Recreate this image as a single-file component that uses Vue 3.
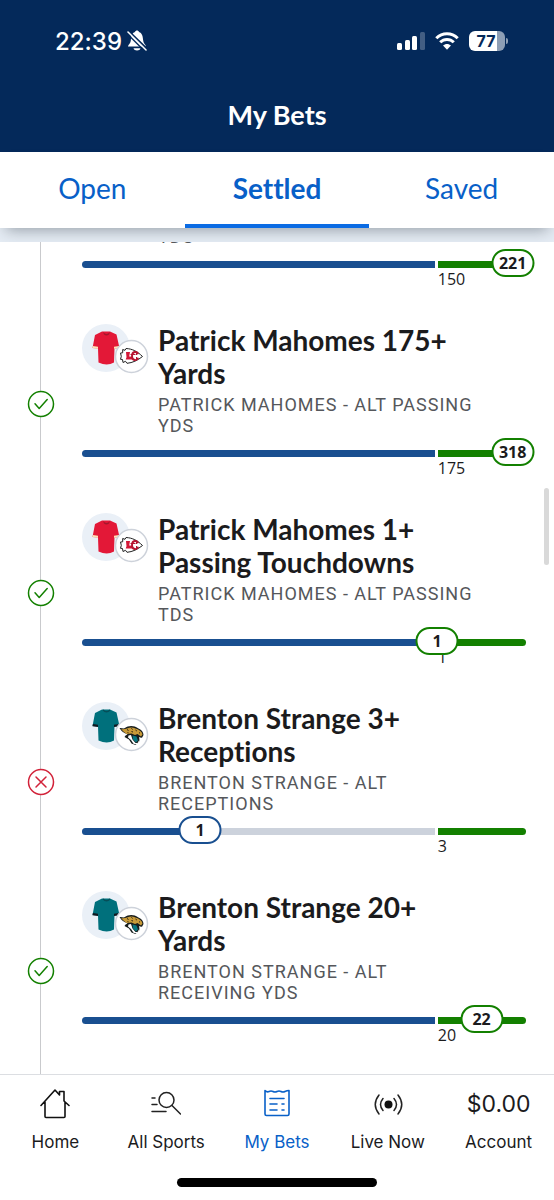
<script setup>
import { ref } from 'vue'

const tabs = ['Open', 'Settled', 'Saved']
const activeTab = ref('Settled')

const legs = [
  { id: 1, partial: true, market: 'YDS', fill: 100, at: 97, value: '221', target: '150', tone: 'win' },
  { id: 2, title: 'Patrick Mahomes 175+ Yards', market: 'PATRICK MAHOMES - ALT PASSING YDS', team: 'chiefs', won: true, fill: 100, at: 97, value: '318', target: '175', tone: 'win' },
  { id: 3, title: 'Patrick Mahomes 1+ Passing Touchdowns', market: 'PATRICK MAHOMES - ALT PASSING TDS', team: 'chiefs', won: true, fill: 100, at: 80, value: '1', target: '1', tone: 'win' },
  { id: 4, title: 'Brenton Strange 3+ Receptions', market: 'BRENTON STRANGE - ALT RECEPTIONS', team: 'jaguars', won: false, fill: 33, at: 26.6, value: '1', target: '3', tone: 'loss' },
  { id: 5, title: 'Brenton Strange 20+ Yards', market: 'BRENTON STRANGE - ALT RECEIVING YDS', team: 'jaguars', won: true, fill: 100, at: 90, value: '22', target: '20', tone: 'win' },
]
</script>

<template>
  <div class="app">
    <header class="header">
      <div class="status">
        <div class="status-side">
          <span class="clock">22:39</span>
          <svg width="20" height="22" viewBox="0 0 20 22" aria-hidden="true">
            <path d="M1 16.500c0-1.500 2.300-2.500 2.800-6C4.200 6 5 3 8 2c.6-2 3.400-2 4 0 3 1 3.800 4 4.200 8.500.5 3.500 2.800 4.500 2.800 6z" fill="#fff" />
            <path d="M6.500 18.200h7c-.5 3-6.500 3-7 0z" fill="#fff" />
            <path d="M1 .5 20 19" stroke="#04295a" stroke-width="2" />
            <path d="M1 2 19 20" stroke="#fff" stroke-width="1.600" stroke-linecap="round" />
            <path d="M0 3.500 18 21.500" stroke="#04295a" stroke-width="1.300" />
          </svg>
        </div>
        <div class="status-side indicators">
          <svg width="28" height="18" viewBox="0 0 28 18" aria-hidden="true">
            <rect x="0" y="11" width="5" height="7" rx="1.500" fill="#fff" />
            <rect x="8" y="8" width="5" height="10" rx="1.500" fill="#fff" />
            <rect x="15" y="4" width="5" height="14" rx="1.500" fill="#fff" />
            <rect x="23" y="0" width="5" height="18" rx="1.500" fill="#fff" opacity=".25" />
          </svg>
          <svg width="24" height="18" viewBox="0 0 24 18" aria-hidden="true">
            <path d="M1.300 6.300C7.300.2 16.700.2 22.700 6.300M5.200 10.300c3.900-3.900 9.700-3.900 13.600 0" fill="none" stroke="#fff" stroke-width="3" />
            <path d="M8 13.600c2.300-2.200 5.700-2.200 8 0L12 17.800z" fill="#fff" />
          </svg>
          <div class="battery"><span class="cell">77</span><span class="cap"></span></div>
        </div>
      </div>
      <h1 class="page-title">My Bets</h1>
    </header>

    <nav class="tabs" aria-label="Bet status">
      <button v-for="tab in tabs" :key="tab" type="button" class="tab" :class="{ active: tab === activeTab }" @click="activeTab = tab">{{ tab }}</button>
    </nav>
    <div class="strip"></div>

    <main class="list">
      <article v-for="leg in legs" :key="leg.id" class="leg" :class="{ partial: leg.partial }">
        <div class="rail">
          <svg v-if="!leg.partial" class="result" width="28" height="28" viewBox="0 0 28 28" role="img" :aria-label="leg.won ? 'Won' : 'Lost'">
            <template v-if="leg.won">
              <circle cx="14" cy="14" r="12.500" fill="#fff" stroke="#138000" stroke-width="1.500" />
              <path d="M8 13.800 12.200 18.500 20.200 9.500" fill="none" stroke="#138000" stroke-width="1.500" stroke-linecap="round" stroke-linejoin="round" />
            </template>
            <template v-else>
              <circle cx="14" cy="14" r="12.500" fill="#fff" stroke="#d22239" stroke-width="1.500" />
              <path d="M9 9 19 19M19 9 9 19" fill="none" stroke="#d22239" stroke-width="1.500" stroke-linecap="round" />
            </template>
          </svg>
        </div>
        <div class="body">
          <div class="info">
            <div class="avatar">
              <svg v-if="!leg.partial" width="68" height="50" viewBox="0 0 68 50" aria-hidden="true">
                <circle cx="24" cy="24" r="24" fill="#eaf0f7" />
                <g v-if="leg.team === 'chiefs'">
                  <path d="M20 7.500h8l6.500 3 3 13.500-5 .5-.5 14q-7 4-15.500 0L16 24.500l-5.500-.5 2.500-13z" fill="#e31837" />
                  <path d="m10.800 22 5.200.8v2l-5.500-.8zM37 22l-5 .8v2l5.300-.8z" fill="#ffe3b8" />
                  <path d="M21 8q3.500 4 7 0l-1 2.500q-2.500 2-5 0z" fill="#a3172d" />
                </g>
                <g v-else>
                  <path d="M20 7.500h8l6.500 3 3 13.500-5 .5-.5 14q-7 4-15.500 0L16 24.500l-5.500-.5 2.500-13z" fill="#00707c" />
                  <path d="m10.900 22 5.100.8v2.200l-5.500-.8zM37 22l-5 .8v2.200l5.300-.8z" fill="#101820" />
                  <path d="M21 8q3.500 3.500 7 0" fill="none" stroke="#064e58" stroke-width="1.200" />
                </g>
                <circle cx="49.500" cy="32.500" r="16" fill="#fff" stroke="#cdd2da" stroke-width="1.500" />
                <g v-if="leg.team === 'chiefs'">
                  <path d="m38.500 29 2.200-.2v-3.300l2.300.8 1-1.800c6.500.3 11.500 3 16.500 8-5 4-10 6.300-15.500 6.800l-1.500-2-2.500 1.200-.5-3-2-.2.800-3z" fill="#fff" stroke="#222" stroke-width="1" stroke-linejoin="round" />
                  <path d="M44 28h4l-.8 4.500 3.500.3-.7 2.700h-6.300l.8-2.200z" fill="#d31736" />
                  <path d="M56 30.200c-.8-3.400-6-3-6 1.800 0 5 5 5.200 6.200 1.800" fill="none" stroke="#b51430" stroke-width="1.900" />
                  <path d="M48.500 30.500h5M54.500 28v3M54.500 33v3.200" stroke="#b51430" stroke-width="1" />
                </g>
                <g v-else>
                  <path d="M37.500 26c2-.5 3 .8 5 .3 4-3 9.500-3 13.500 0 3.500 1.200 5.500 4 5.500 6.700l-1.500 2.800-2-.3-1 4.500-3.500 3-4-1.500-2.500-4-4.500-2.500 1-1.500-2.500-2.500z" fill="#171c1b" />
                  <path d="M39 27c5 1.500 8-3.500 14.500-.5 4 1.200 6.500 3.200 7 6l-1.500 2-3.500-2.500-2.500 1-3.500-1.500-5 .5-2.500-2z" fill="#c89a38" />
                  <path d="M38.700 28.500 42.500 31l3 1.500-3 1.500zM46.500 33.500l2.500-.5 1.500 4.500 3 3.500h2l1.500-2.500v2l-2.500 2-3-.8-2.500-3.700-3-2.500z" fill="#fff" />
                  <path d="m50.500 33.500 4 1 1.500 4-2 2-3-3z" fill="#087680" />
                  <path d="m57 35 1 .5-.8 3z" fill="#fff" />
                  <path d="m45 27.500 1.500 1M49.500 26.300l1 1.200M53.500 28l1.300 1M57 30.500l1 .8M49.500 29.500l1.500.5M45.500 30.500l1 .3" stroke="#282014" stroke-width="1" />
                </g>
              </svg>
            </div>
            <div class="words">
              <h2 v-if="leg.title" class="title">{{ leg.title }}</h2>
              <p class="market">{{ leg.market }}</p>
            </div>
          </div>
          <div class="meter">
            <div class="track"><div class="fill" :style="{ width: leg.fill + '%' }"></div></div>
            <div class="goal"></div>
            <span class="badge" :class="leg.tone" :style="{ left: leg.at + '%' }">{{ leg.value }}</span>
            <span class="target">{{ leg.target }}</span>
          </div>
        </div>
      </article>
      <div class="thumb"></div>
    </main>

    <footer class="dock">
      <nav class="links" aria-label="Main">
        <a href="#home" class="link">
          <span class="glyph"><svg width="30" height="30" viewBox="0 0 30 30" fill="none" stroke="#111" stroke-width="1.600" stroke-linecap="round" stroke-linejoin="round" aria-hidden="true"><path d="M1 16.500 15 1l4.500 5V2.500H24V12l5 4.500M5 13v14.500q0 1 1 1h18q1 0 1-1V13" /></svg></span>
          <span>Home</span>
        </a>
        <a href="#sports" class="link">
          <span class="glyph"><svg width="30" height="30" viewBox="0 0 30 30" fill="none" stroke="#222" stroke-width="1.500" stroke-linecap="round" aria-hidden="true"><circle cx="15.500" cy="11" r="7.500" /><path d="m21 16.500 8.500 8.500M1 9h3M1 15.500h5M1 22.500h14" /></svg></span>
          <span>All Sports</span>
        </a>
        <a href="#bets" class="link current" aria-current="page">
          <span class="glyph"><svg width="28" height="30" viewBox="0 0 28 30" fill="none" stroke="#0860c8" stroke-width="1.600" stroke-linecap="round" stroke-linejoin="round" aria-hidden="true"><path d="M2 1.500q2 2 4 1t4 0 4 0 4 0 4 0 4-1v23.500q0 1.500-1.500 1.500h-21Q2 26.500 2 25zM7 9.500h14M7 15h7M19 15h2M7 21h7M19 21h2" /></svg></span>
          <span>My Bets</span>
        </a>
        <a href="#live" class="link">
          <span class="glyph"><svg width="30" height="30" viewBox="0 0 30 30" fill="none" stroke="#222" stroke-width="1.500" stroke-linecap="round" aria-hidden="true"><circle cx="15.500" cy="15.500" r="4" fill="#111" stroke="none" /><path d="M6 6q-7.500 9.500 0 19M10 9.500q-5 6 0 12M25 6q7.500 9.500 0 19M21 9.500q5 6 0 12" /></svg></span>
          <span>Live Now</span>
        </a>
        <a href="#account" class="link">
          <span class="glyph balance">$0.00</span>
          <span>Account</span>
        </a>
      </nav>
      <div class="home-bar"></div>
    </footer>
  </div>
</template>

<style>
body { margin: 0; background: #fff; }
</style>

<style scoped>
.app {
  display: flex;
  flex-direction: column;
  height: 100vh;
  overflow: hidden;
  color: #1b1b1d;
  font-family: Lato, "Open Sans", sans-serif;
  font-variant-ligatures: none;
}
.header {
  flex: none;
  padding: 26px 46px 20px;
  background: #04295a;
  color: #fff;
}
.status { display: flex; justify-content: space-between; height: 30px; padding-left: 9px; }
.status-side { display: flex; align-items: center; gap: 5px; font-family: Inter, sans-serif; }
.indicators { gap: 10px; }
.clock { font-size: 24px; font-weight: 500; }
.battery { display: flex; align-items: center; gap: 1px; }
.cell {
  box-sizing: border-box;
  width: 36px;
  height: 20px;
  padding-right: 2px;
  border-radius: 6px;
  background: linear-gradient(90deg, #fff 77%, #8d9eb5 77%);
  color: #04295a;
  font-size: 16px;
  font-weight: 700;
  line-height: 20px;
  text-align: center;
}
.cap { width: 2px; height: 6px; border-radius: 0 2px 2px 0; background: #8d9eb5; }
.page-title { margin: 42px 0 0; font-size: 27px; line-height: 34px; text-align: center; }
.tabs {
  position: relative;
  z-index: 1;
  display: flex;
  flex: none;
  height: 76px;
  background: #fff;
  box-shadow: 0 8px 14px -6px rgba(30, 40, 50, 0.4);
}
.tab {
  flex: 1;
  padding: 0;
  border: 0;
  border-bottom: 4px solid transparent;
  background: none;
  color: #0860c8;
  font: 400 28px/72px Lato, sans-serif;
  font-variant-ligatures: none;
}
.tab.active { border-color: #0b6be3; font-weight: 700; }
.strip { flex: none; height: 14px; background: #e5ecf4; }
.list { position: relative; z-index: 2; flex: 1; min-height: 0; overflow: hidden; background: #fff; }
.leg { display: flex; height: 189px; }
.leg.partial { height: 98px; margin-top: -16px; }
.rail {
  display: flex;
  justify-content: center;
  flex: none;
  width: 81px;
  background: linear-gradient(#c9cacd, #c9cacd) center / 1px 100% no-repeat;
}
.result { margin-top: 66px; }
.body { flex: 1; min-width: 0; padding: 0 28px 0 1px; }
.info { display: flex; }
.avatar { flex: none; width: 76px; }
.words { flex: 1; min-width: 0; padding-right: 50px; }
.title { margin: 0 0 4px; font-size: 28px; line-height: 33px; }
.market { margin: 0; color: #55575b; font: 400 18px/21px Roboto, sans-serif; letter-spacing: 1px; }
.meter { position: relative; display: grid; grid-template-columns: 4fr 1fr; column-gap: 3px; margin-top: 14px; }
.track { height: 7px; overflow: hidden; border-radius: 4px 0 0 4px; background: #ccd2dc; }
.fill { height: 7px; background: #194f90; }
.goal { height: 7px; border-radius: 0 4px 4px 0; background: #138000; }
.target { grid-column: 2; font-family: "Open Sans", sans-serif; font-size: 16px; line-height: 22px; }
.badge {
  position: absolute;
  top: -12px;
  box-sizing: border-box;
  min-width: 43px;
  height: 28px;
  border: 2px solid #138000;
  border-radius: 14px;
  background: #fff;
  font-family: "Open Sans", sans-serif;
  font-size: 16px;
  font-weight: 700;
  line-height: 24px;
  text-align: center;
  transform: translateX(-50%);
}
.badge.loss { border-color: #194f90; }
.thumb { position: absolute; top: 246px; right: 5px; width: 5px; height: 77px; border-radius: 3px; background: #d9d9d9; }
.dock { flex: none; border-top: 1px solid #dcdee2; background: #fff; }
.links { display: flex; }
.link {
  display: flex;
  flex: 1;
  flex-direction: column;
  align-items: center;
  padding-top: 13px;
  color: #1b1b1d;
  font: 400 17px/24px Inter, sans-serif;
  text-decoration: none;
}
.glyph { display: flex; align-items: center; height: 32px; margin-bottom: 10px; }
.balance { font-size: 23px; }
.current { color: #0860c8; }
.home-bar { width: 36%; height: 9px; margin: 24px auto 13px; border-radius: 5px; background: #000; }
</style>
